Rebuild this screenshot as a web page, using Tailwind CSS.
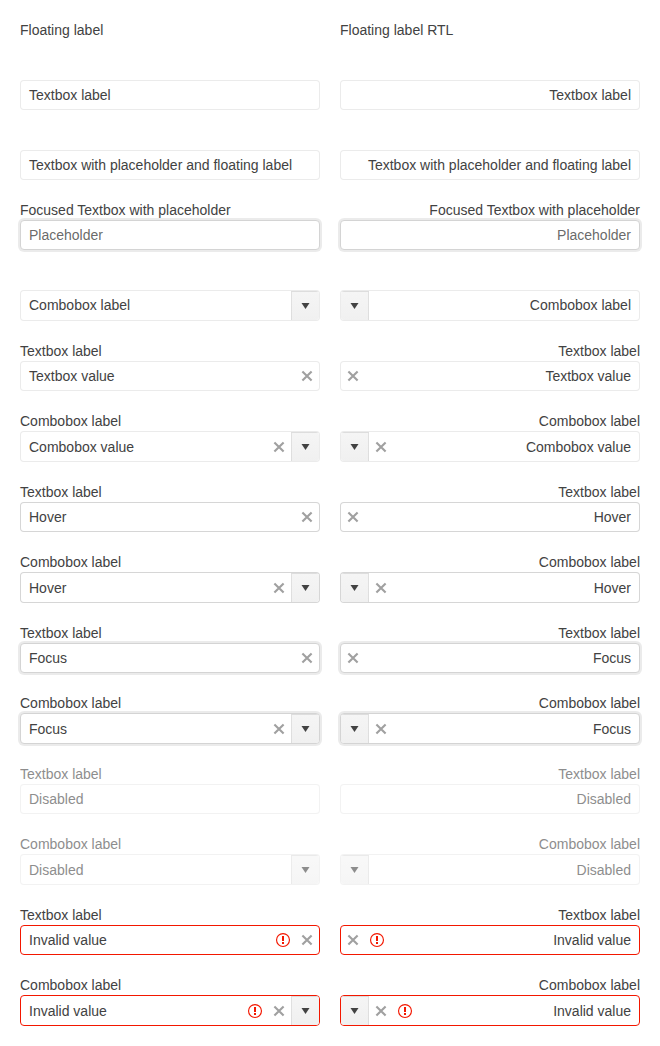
<!DOCTYPE html>
<html lang="en">
<head>
<meta charset="utf-8">
<title>Floating label</title>
<script src="https://cdn.jsdelivr.net/npm/@tailwindcss/browser@4"></script>
</head>
<body class="bg-white font-['Liberation_Sans',Arial,sans-serif] text-[14px] leading-5 text-[#424242]">
<main class="flex gap-5 px-5 pt-5">
  <section id="ltr" class="w-[300px]"><h1>Floating label</h1></section>
  <section id="rtl" class="w-[300px]"><h1>Floating label RTL</h1></section>
</main>
<script>
const clear = `<span class="flex w-6 shrink-0 items-center justify-center text-[#424242]/50"><svg class="size-4" viewBox="0 0 16 16"><path d="M3.4 3.4 12.6 12.6M12.6 3.4 3.4 12.6" stroke="currentColor" stroke-width="2.1" fill="none"/></svg></span>`;
const invalid = `<span class="flex w-6 shrink-0 items-center justify-center text-[#f31700]"><svg class="size-4" viewBox="0 0 16 16"><circle cx="8" cy="8" r="6.45" stroke="currentColor" stroke-width="1.15" fill="none"/><path d="M7 4h2v5H7zM7 10h2v2H7z" fill="currentColor"/></svg></span>`;
const arrow = `<span class="flex w-7 shrink-0 items-center justify-center border-s border-t border-black/8 bg-linear-to-b from-[#f5f5f5] to-[#f0f0f0]"><svg class="size-4" viewBox="0 0 16 16"><path d="M3.5 5h8l-4 6z" fill="currentColor"/></svg></span>`;
const styles = {
  normal: 'border-black/8',
  hover: 'border-black/16',
  focus: 'border-[#d4d4d4] shadow-[0_0_0_2px_rgba(0,0,0,0.08)]',
  invalid: 'border-[#f31700]'
};
// [type, floating label, value, state, clear button]
const fields = [
  ['text', '', 'Textbox label', 'normal', false],
  ['text', '', 'Textbox with placeholder and floating label', 'normal', false],
  ['text', 'Focused Textbox with placeholder', 'Placeholder', 'focus', false],
  ['combo', '', 'Combobox label', 'normal', false],
  ['text', 'Textbox label', 'Textbox value', 'normal', true],
  ['combo', 'Combobox label', 'Combobox value', 'normal', true],
  ['text', 'Textbox label', 'Hover', 'hover', true],
  ['combo', 'Combobox label', 'Hover', 'hover', true],
  ['text', 'Textbox label', 'Focus', 'focus', true],
  ['combo', 'Combobox label', 'Focus', 'focus', true],
  ['text', 'Textbox label', 'Disabled', 'disabled', false],
  ['combo', 'Combobox label', 'Disabled', 'disabled', false],
  ['text', 'Textbox label', 'Invalid value', 'invalid', true],
  ['combo', 'Combobox label', 'Invalid value', 'invalid', true]
];
for (const dir of ['ltr', 'rtl']) {
  const html = fields.map(([type, label, value, state, hasClear]) => `
    <div dir="${dir}" class="mt-5 ${state === 'disabled' ? 'opacity-60' : ''}">
      <div class="h-5 whitespace-nowrap">${label}</div>
      <div class="flex overflow-hidden rounded-[4px] border bg-white ${type === 'combo' ? 'h-[31px]' : 'h-[30px]'} ${styles[state] || styles.normal}">
        <span class="grow whitespace-nowrap px-2 ${type === 'combo' && label ? 'pt-[5px]' : 'pt-1'} ${value === 'Placeholder' ? 'text-[#424242]/80' : ''}">${value}</span>
        ${state === 'invalid' ? invalid : ''}${hasClear ? clear : ''}${type === 'combo' ? arrow : ''}
      </div>
    </div>`).join('');
  document.getElementById(dir).insertAdjacentHTML('beforeend', html);
}
</script>
</body>
</html>
